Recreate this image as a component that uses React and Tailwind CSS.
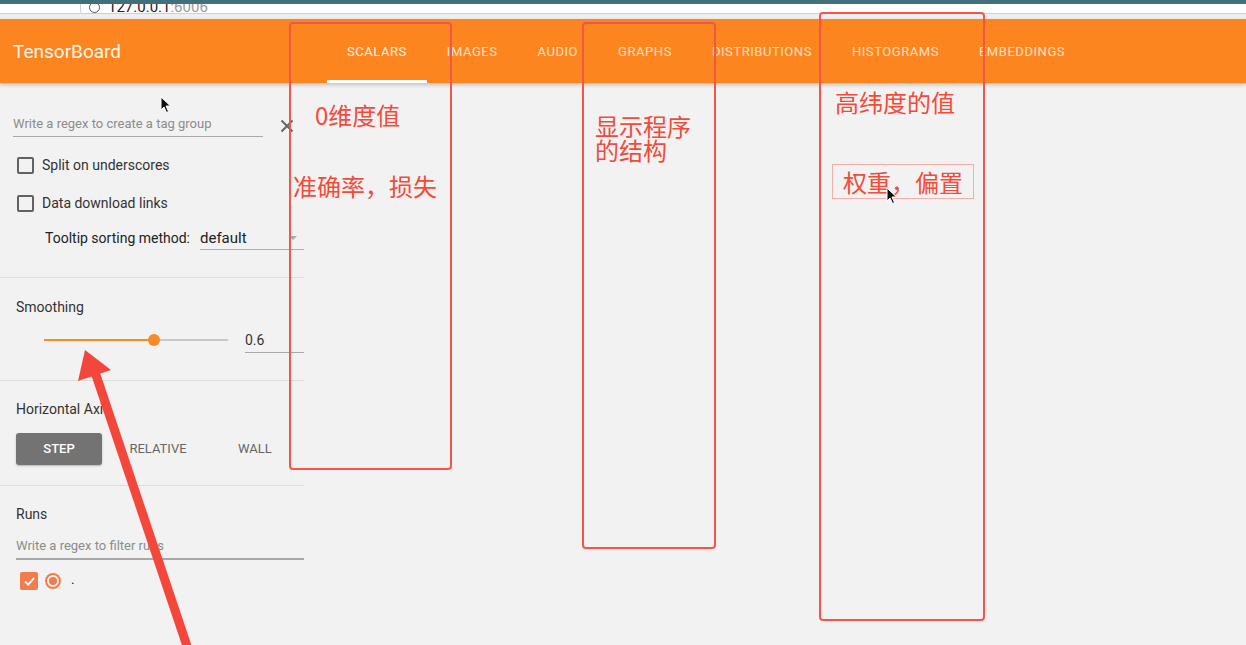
import React from "react";

const tabs = ["SCALARS", "IMAGES", "AUDIO", "GRAPHS", "DISTRIBUTIONS", "HISTOGRAMS", "EMBEDDINGS"];

function Cursor({ className }) {
  return (
    <svg className={className} width="12" height="18" viewBox="0 0 12 18">
      <path d="M1 1 L1 14 L4 11 L6.5 16.5 L8.5 15.5 L6 10 L10.5 10 Z" fill="#111" stroke="#fff" strokeWidth="1" />
    </svg>
  );
}

function Box() {
  return <div className="w-[17px] h-[17px] border-2 border-[#626262] rounded-[2px] shrink-0" />;
}

export default function App() {
  return (
    <div className="relative w-[1246px] h-[645px] overflow-hidden bg-[#f2f2f2] text-[#333]" style={{ fontFamily: "Roboto, 'Noto Sans', sans-serif" }}>
      {/* browser chrome remnants */}
      <div className="h-[4px] bg-[#42707a]" />
      <div className="h-[9px] bg-white relative overflow-hidden">
        <div className="absolute left-[80px] top-[-8px] w-[1200px] h-[20px] border border-[#d0d0d0] rounded-[6px] bg-white flex items-end pl-[8px]">
          <div className="w-[11px] h-[11px] rounded-full border border-[#555] mb-[2px]" />
          <span className="ml-[8px] text-[15px] leading-[16px] text-[#222]">127.0.0.1<span className="text-[#999]">:6006</span></span>
        </div>
      </div>
      <div className="h-[1px] bg-[#cfcfcf]" />
      <div className="h-[5px] bg-[#efefef]" />

      {/* header */}
      <div className="h-[64px] bg-[#fc8520] flex items-stretch shadow-[0_2px_4px_rgba(0,0,0,0.2)] relative z-10">
        <div className="w-[327px] pl-[13px] flex items-center pt-[2px] text-[19px] text-[#fff4e8]">TensorBoard</div>
        <div className="flex items-stretch">
          {tabs.map((t, i) => (
            <div
              key={t}
              className={
                "px-[20px] flex items-center text-[13px] tracking-[0.55px] border-b-[3px] pt-[4px] " +
                (i === 0 ? "border-white text-[#fff3e4]" : "border-transparent text-[#fde0c2]")
              }
            >
              {t}
            </div>
          ))}
        </div>
      </div>

      {/* body */}
      <div className="flex">
        <div className="w-[304px] shrink-0">
          {/* section 1 */}
          <div className="h-[195px] border-b border-[#dcdcdc] pt-[29px]">
            <div className="flex items-center">
              <div className="ml-[13px] w-[250px] h-[25px] border-b border-[#a8a8a8] flex items-end pb-[3px] text-[13px] text-[#8c8c8c]">
                Write a regex to create a tag group
              </div>
              <svg className="ml-[17px] mt-[2px]" width="14" height="14" viewBox="0 0 14 14">
                <path d="M1.5 1.5 L12.5 12.5 M12.5 1.5 L1.5 12.5" stroke="#666" strokeWidth="2" />
              </svg>
            </div>
            <div className="flex items-center ml-[17px] mt-[18px] h-[20px] gap-[8px] text-[14px] text-[#333]">
              <Box />
              <span>Split on underscores</span>
            </div>
            <div className="flex items-center ml-[17px] mt-[18px] h-[20px] gap-[8px] text-[14px] text-[#333]">
              <Box />
              <span>Data download links</span>
            </div>
            <div className="flex items-center ml-[45px] mt-[13px] h-[24px]">
              <span className="text-[14px] text-[#222]">Tooltip sorting method:</span>
              <div className="ml-[10px] w-[104px] h-[24px] border-b border-[#b0b0b0] flex items-center justify-between pt-[1px]">
                <span className="text-[15px] text-[#222]">default</span>
                <span className="w-0 h-0 border-l-[4px] border-r-[4px] border-t-[4px] border-l-transparent border-r-transparent border-t-[#aaa] mr-[7px]" />
              </div>
            </div>
          </div>

          {/* section 2 */}
          <div className="h-[103px] border-b border-[#dcdcdc] pt-[20px]">
            <div className="ml-[16px] text-[14px] h-[18px] leading-[18px] text-[#333]">Smoothing</div>
            <div className="flex items-center mt-[16px] h-[16px]">
              <div className="ml-[44px] w-[184px] h-[2px] bg-[#c8c8c8] relative">
                <div className="absolute left-0 top-0 h-[2px] w-[110px] bg-[#f68b28]" />
                <div className="absolute left-[104px] top-[-5px] w-[12px] h-[12px] rounded-full bg-[#f68b28]" />
              </div>
              <div className="ml-[17px] w-[59px] h-[24px] border-b border-[#a8a8a8] flex items-center text-[14px] text-[#333] relative top-[1px]">
                0.6
              </div>
            </div>
          </div>

          {/* section 3 */}
          <div className="h-[105px] border-b border-[#dcdcdc] pt-[19px]">
            <div className="ml-[16px] text-[14px] h-[18px] leading-[18px] text-[#333]">Horizontal Axis</div>
            <div className="flex items-center mt-[15px] ml-[16px]">
              <div className="w-[86px] h-[32px] bg-[#737373] rounded-[3px] shadow-[0_1px_2px_rgba(0,0,0,0.25)] flex items-center justify-center text-[13px] font-medium text-white">
                STEP
              </div>
              <div className="w-[112px] text-center text-[13px] text-[#666]">RELATIVE</div>
              <div className="ml-[24px] text-[13px] text-[#666]">WALL</div>
            </div>
          </div>

          {/* section 4 */}
          <div className="pt-[19px]">
            <div className="ml-[16px] text-[14px] h-[18px] leading-[18px] text-[#333]">Runs</div>
            <div className="ml-[16px] mt-[13px] h-[24px] border-b-2 border-[#a8a8a8] flex items-end pb-[3px] text-[13px] text-[#8c8c8c]">
              Write a regex to filter runs
            </div>
            <div className="flex items-center ml-[20px] mt-[11px] h-[20px]">
              <div className="w-[18px] h-[18px] rounded-[2px] bg-[#f47b4c] flex items-center justify-center">
                <svg width="13" height="13" viewBox="0 0 13 13">
                  <path d="M2 6.5 L5.2 9.6 L11 3.2" stroke="#fff" strokeWidth="2" fill="none" />
                </svg>
              </div>
              <div className="ml-[7px] w-[16px] h-[16px] rounded-full border-2 border-[#f47b4c] flex items-center justify-center">
                <div className="w-[8px] h-[8px] rounded-full bg-[#f47b4c]" />
              </div>
              <span className="ml-[10px] text-[14px] text-[#222] relative -top-[2px]">.</span>
            </div>
          </div>
        </div>
        <div className="flex-1" />
      </div>

      {/* annotation overlays */}
      <div className="absolute inset-0 pointer-events-none z-20" style={{ fontFamily: "'Noto Sans CJK SC', sans-serif" }}>
        <div className="absolute left-[289px] top-[22px] w-[163px] h-[448px] border-2 border-[#f2554a] rounded-[4px]" />
        <div className="absolute left-[582px] top-[22px] w-[134px] h-[527px] border-2 border-[#f2554a] rounded-[4px]" />
        <div className="absolute left-[819px] top-[12px] w-[166px] h-[609px] border-2 border-[#f2554a] rounded-[4px]" />

        <div className="absolute left-[315px] top-[102px] text-[24px] leading-[26px] text-[#f14b3b]">0维度值</div>
        <div className="absolute left-[293px] top-[173px] text-[24px] leading-[26px] text-[#f14b3b]">准确率，损失</div>
        <div className="absolute left-[595px] top-[114px] text-[24px] leading-[24px] text-[#f14b3b]">
          <div className="h-[24px]">显示程序</div>
          <div className="h-[24px]">的结构</div>
        </div>
        <div className="absolute left-[835px] top-[89px] text-[24px] leading-[26px] text-[#f14b3b]">高纬度的值</div>
        <div className="absolute left-[832px] top-[164px] w-[142px] h-[35px] border border-[#f4b0a8] flex items-center pl-[10px] text-[24px] leading-[26px] text-[#f14b3b]">
          权重，偏置
        </div>

        <svg className="absolute left-0 top-0" width="1246" height="645">
          <line x1="95" y1="372" x2="189" y2="652" stroke="#f4473b" strokeWidth="9" />
          <polygon points="85,350 78,381 111,370" fill="#f4473b" />
        </svg>

        <Cursor className="absolute left-[160px] top-[96px]" />
        <Cursor className="absolute left-[886px] top-[187px]" />
      </div>
    </div>
  );
}
